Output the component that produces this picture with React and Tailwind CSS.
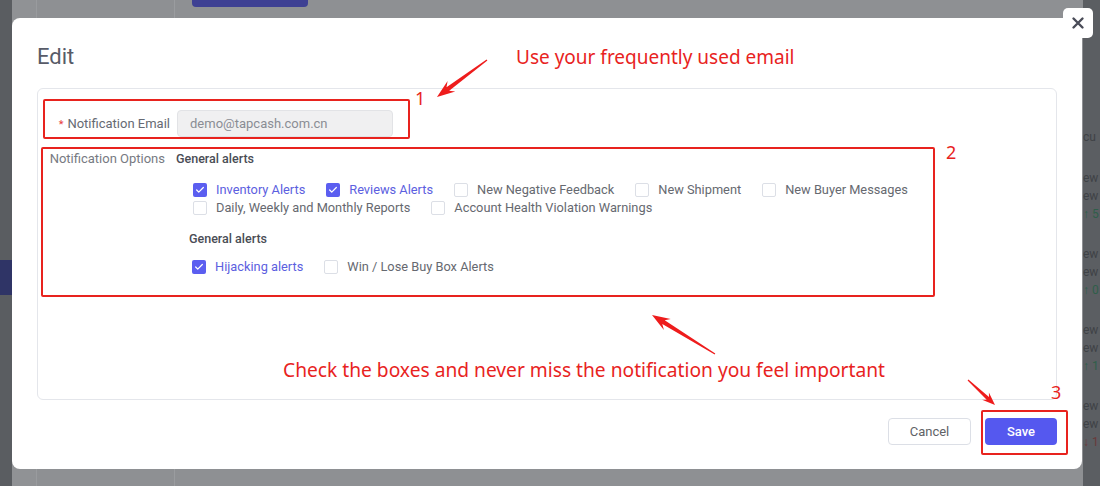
import React from "react";
import { Check } from "lucide-react";

function arrowPoints(tx, ty, hx, hy, headLen, headW, shaftW) {
  const dx = hx - tx, dy = hy - ty;
  const L = Math.sqrt(dx * dx + dy * dy);
  const ux = dx / L, uy = dy / L;
  const px = -uy, py = ux;
  const bx = hx - ux * headLen, by = hy - uy * headLen;
  const nx = hx - ux * headLen * 0.75, ny = hy - uy * headLen * 0.75;
  const pts = [
    [tx + px * 0.6, ty + py * 0.6],
    [nx + px * shaftW / 2, ny + py * shaftW / 2],
    [bx + px * headW / 2, by + py * headW / 2],
    [hx, hy],
    [bx - px * headW / 2, by - py * headW / 2],
    [nx - px * shaftW / 2, ny - py * shaftW / 2],
    [tx - px * 0.6, ty - py * 0.6],
  ];
  return pts.map((p) => p[0].toFixed(1) + "," + p[1].toFixed(1)).join(" ");
}

function Cb({ checked, label }) {
  return (
    <div className="flex items-center gap-[9px] h-[18px]">
      {checked ? (
        <span className="w-[14px] h-[14px] rounded-[2px] bg-[#5b5ef0] flex items-center justify-center">
          <Check size={10} strokeWidth={3} color="#ffffff" />
        </span>
      ) : (
        <span className="w-[14px] h-[14px] rounded-[2px] border border-[#dcdfe6] bg-white" />
      )}
      <span className={checked ? "text-[#5c60e0]" : "text-[#666970]"}>{label}</span>
    </div>
  );
}

export default function App() {
  return (
    <div className="relative w-[1100px] h-[486px] overflow-hidden bg-[#8e9093] font-[Roboto,sans-serif]">
      {/* background page (dimmed) */}
      <div className="flex h-full">
        <div className="w-[12px] h-full bg-[#5a5d61] flex flex-col">
          <div className="h-[260px]" />
          <div className="h-[35px] bg-[#2f3466]" />
        </div>
        <div className="w-[25px] h-full bg-[#909295] border-r border-[#999b9e]" />
        <div className="w-[138px] h-full bg-[#8e9093] border-r border-[#9a9c9f]" />
        <div className="flex-1 h-full">
          <div className="ml-[17px] w-[116px] h-[7px] bg-[#3e4093] rounded-b-[4px]" />
        </div>
        <div className="w-[17px] h-full bg-[#5b5e62] pt-[128px] text-[12px] leading-[18px] text-[#3f4246] whitespace-nowrap overflow-hidden">
          <div>cu</div>
          <div className="mt-[23px]">ew</div>
          <div>ew</div>
          <div className="text-[#2f5f4a]">↑ 5</div>
          <div className="mt-[22px]">ew</div>
          <div>ew</div>
          <div className="text-[#2f5f4a]">↑ 0</div>
          <div className="mt-[22px]">ew</div>
          <div>ew</div>
          <div className="text-[#2f5f4a]">↑ 1</div>
          <div className="mt-[22px]">ew</div>
          <div>ew</div>
          <div className="text-[#6a3a3a]">↓ 1</div>
        </div>
      </div>

      {/* modal */}
      <div className="absolute left-[12px] top-[18px] w-[1070px] h-[451px] bg-white rounded-[8px] px-[25px] pt-[25px] flex flex-col">
        <div className="h-[28px] leading-[28px] text-[22px] text-[#575b68]">Edit</div>
        <div className="mt-[17px] h-[312px] border border-[#e4e6eb] rounded-[6px] pt-[21px] text-[12.8px]">
          <div className="flex items-center h-[27px]">
            <div className="w-[132px] text-right text-[#666a73] text-[13px]">
              <span className="text-[#e83a3a] mr-[4px] text-[11px]">*</span>Notification Email
            </div>
            <div className="ml-[7px] w-[216px] h-[27px] rounded-[4px] bg-[#f0f0f1] border border-[#e2e3e6] flex items-center pl-[12px] text-[#8a8d94] text-[13px]">
              demo@tapcash.com.cn
            </div>
          </div>
          <div className="flex mt-[13px]">
            <div className="w-[132px] pr-[5px] text-right text-[#777a82] leading-[18px] text-[13px]">Notification Options</div>
            <div className="ml-[6px] flex flex-col">
              <div className="leading-[18px] font-medium text-[#4a4d55] text-[12.5px]">General alerts</div>
              <div className="ml-[17px] mt-[13px] w-[740px] flex flex-wrap gap-x-[21px]">
                <Cb checked label="Inventory Alerts" />
                <Cb checked label="Reviews Alerts" />
                <Cb label="New Negative Feedback" />
                <Cb label="New Shipment" />
                <Cb label="New Buyer Messages" />
                <Cb label="Daily, Weekly and Monthly Reports" />
                <Cb label="Account Health Violation Warnings" />
              </div>
              <div className="ml-[13px] mt-[13px] leading-[18px] font-medium text-[#4a4d55] text-[12.5px]">General alerts</div>
              <div className="ml-[16px] mt-[10px] flex flex-wrap gap-x-[21px]">
                <Cb checked label="Hijacking alerts" />
                <Cb label="Win / Lose Buy Box Alerts" />
              </div>
            </div>
          </div>
        </div>
        <div className="mt-[18px] flex justify-end gap-[14px]">
          <button className="w-[83px] h-[27px] rounded-[4px] border border-[#dcdfe6] bg-white text-[13px] text-[#606266]">
            Cancel
          </button>
          <button className="w-[72px] h-[27px] rounded-[4px] bg-[#5558ef] text-[13px] font-medium text-white">
            Save
          </button>
        </div>
      </div>

      {/* close button */}
      <button className="absolute left-[1063px] top-[8px] w-[30px] h-[30px] bg-white rounded-[5px] flex items-center justify-center">
        <svg width="14" height="14" viewBox="0 0 14 14">
          <path d="M2.5 2.5 L11.5 11.5 M11.5 2.5 L2.5 11.5" stroke="#4a4c58" strokeWidth="2.4" strokeLinecap="round" />
        </svg>
      </button>

      {/* annotations */}
      <div className="absolute left-[43px] top-[99px] w-[367px] h-[40px] border-2 border-[#e8231e] rounded-[2px]" />
      <div className="absolute left-[41px] top-[147px] w-[894px] h-[150px] border-2 border-[#e8231e] rounded-[2px]" />
      <div className="absolute left-[981px] top-[410px] w-[87px] h-[45px] border-2 border-[#e8231e] rounded-[2px]" />

      <div className="absolute left-[415px] top-[86px] text-[18px] leading-[24px] text-[#e8231e] font-['Noto_Sans',sans-serif]">1</div>
      <div className="absolute left-[946px] top-[140px] text-[18px] leading-[24px] text-[#e8231e] font-['Noto_Sans',sans-serif]">2</div>
      <div className="absolute left-[1051px] top-[380px] text-[18px] leading-[24px] text-[#e8231e] font-['Noto_Sans',sans-serif]">3</div>

      <div className="absolute left-[516px] top-[44px] text-[19px] leading-[26px] text-[#e8231e] font-['Noto_Sans',sans-serif] whitespace-nowrap">
        Use your frequently used email
      </div>
      <div className="absolute left-[283px] top-[357px] text-[19.2px] leading-[26px] text-[#e8231e] font-['Noto_Sans',sans-serif] whitespace-nowrap">
        Check the boxes and never miss the notification you feel important
      </div>

      <svg className="absolute left-0 top-0 pointer-events-none" width="1100" height="486">
        <polygon points={arrowPoints(487, 60, 437, 97, 18, 13, 4.5)} fill="#ee1c1c" />
        <polygon points={arrowPoints(715, 354, 652, 315, 18, 13, 4.5)} fill="#ee1c1c" />
        <polygon points={arrowPoints(968, 380, 995, 405, 13, 10, 3.5)} fill="#ee1c1c" />
      </svg>
    </div>
  );
}
